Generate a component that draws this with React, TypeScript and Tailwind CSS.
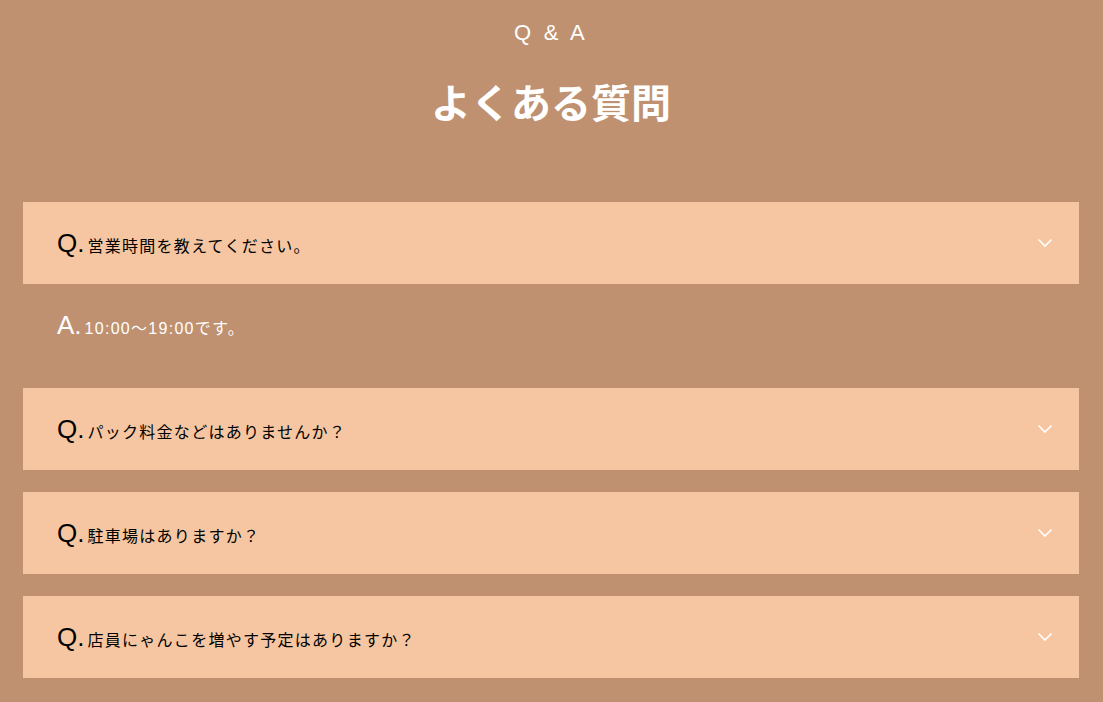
const faqs = [
  { q: "営業時間を教えてください。", a: "10:00〜19:00です。", open: true },
  { q: "パック料金などはありませんか？", a: "", open: false },
  { q: "駐車場はありますか？", a: "", open: false },
  { q: "店員にゃんこを増やす予定はありますか？", a: "", open: false },
]

function Chevron() {
  return (
    <svg width="16" height="10" viewBox="0 0 16 10" fill="none" className="shrink-0">
      <polyline points="1.5,1.5 8,8 14.5,1.5" stroke="#ffffff" strokeWidth="1.6" />
    </svg>
  )
}

export default function App() {
  return (
    <div
      className="min-h-[702px] w-full bg-[#bf9170] pl-[23px] pr-[24px] pb-[24px]"
      style={{ fontFamily: '"Liberation Sans", "Noto Sans CJK JP", sans-serif' }}
    >
      {/* Heading */}
      <div className="pt-[22px] text-center text-white">
        <p className="text-[22px] leading-[22px] tracking-[0.15em]">Q &amp; A</p>
        <h2 className="mt-[40px] text-[40px] font-bold leading-[40px]">よくある質問</h2>
      </div>

      {/* List */}
      <div className="mt-[78px] flex flex-col gap-[22px]">
        {faqs.map((item) => (
          <div key={item.q}>
            <div className="flex h-[82px] items-center justify-between bg-[#f5c6a1] pl-[34px] pr-[26px]">
              <div className="flex items-baseline text-black">
                <span className="text-[26px] leading-none">Q.</span>
                <span className="ml-[3px] text-[16px] leading-none tracking-[0.08em]">{item.q}</span>
              </div>
              <Chevron />
            </div>
            {item.open && (
              <div className="flex h-[82px] items-center pl-[34px] text-white">
                <div className="flex items-baseline">
                  <span className="text-[26px] leading-none">A.</span>
                  <span className="ml-[3px] text-[16px] leading-none tracking-[0.08em]">{item.a}</span>
                </div>
              </div>
            )}
          </div>
        ))}
      </div>
    </div>
  )
}
